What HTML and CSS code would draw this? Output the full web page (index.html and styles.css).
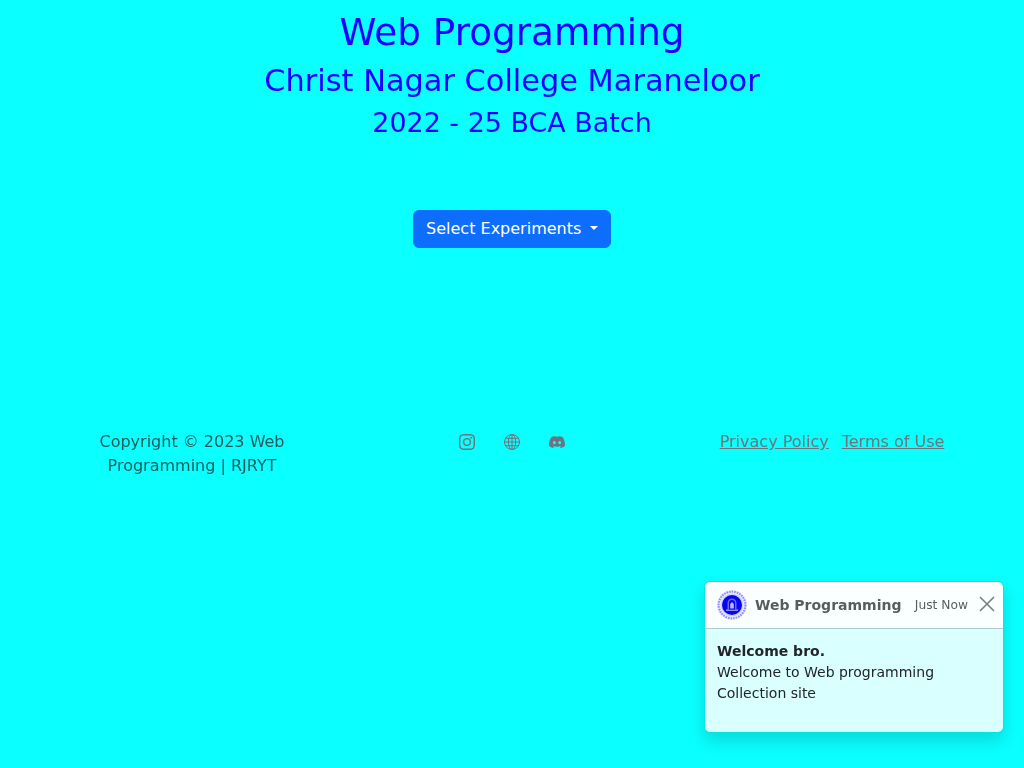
FILE: index.html
```html
<!DOCTYPE html>
<html lang="en">
<head>
<meta charset="utf-8">
<title>Web Programming</title>
<link rel="stylesheet" href="styles.css">
</head>
<body>
<header class="titles">
  <h1 class="t1">Web Programming</h1>
  <h2 class="t2">Christ Nagar College Maraneloor</h2>
  <h3 class="t3">2022 - 25 BCA Batch</h3>
</header>
<div class="action">
  <button class="btn" type="button"><span>Select Experiments</span><span class="caret"></span></button>
</div>
<footer class="footer">
  <div class="col copy">Copyright © 2023 Web Programming | RJRYT</div>
  <div class="col icons">
    <a class="icon" href="#"><svg viewBox="0 0 16 16" width="16" height="16" fill="currentColor"><path d="M8 0C5.829 0 5.556.01 4.703.048 3.85.088 3.269.222 2.76.42a3.9 3.9 0 0 0-1.417.923A3.9 3.9 0 0 0 .42 2.76C.222 3.268.087 3.85.048 4.7.01 5.555 0 5.827 0 8.001c0 2.172.01 2.444.048 3.297.04.852.174 1.433.372 1.942.205.526.478.972.923 1.417.444.445.89.719 1.416.923.51.198 1.09.333 1.942.372C5.555 15.99 5.827 16 8 16s2.444-.01 3.298-.048c.851-.04 1.434-.174 1.943-.372a3.9 3.9 0 0 0 1.416-.923c.445-.445.718-.891.923-1.417.197-.509.332-1.09.372-1.942C15.99 10.445 16 10.173 16 8s-.01-2.445-.048-3.299c-.04-.851-.175-1.433-.372-1.941a3.9 3.9 0 0 0-.923-1.417A3.9 3.9 0 0 0 13.24.42c-.51-.198-1.092-.333-1.943-.372C10.443.01 10.172 0 7.998 0zm-.717 1.442h.718c2.136 0 2.389.007 3.232.046.78.035 1.204.166 1.486.275.373.145.64.319.92.599s.453.546.598.92c.11.281.24.705.275 1.485.039.843.047 1.096.047 3.231s-.008 2.389-.047 3.232c-.035.78-.166 1.203-.275 1.485a2.5 2.5 0 0 1-.599.919c-.28.28-.546.453-.92.598-.28.11-.704.24-1.485.276-.843.038-1.096.047-3.232.047s-2.39-.009-3.233-.047c-.78-.036-1.203-.166-1.485-.276a2.5 2.5 0 0 1-.92-.598 2.5 2.5 0 0 1-.6-.92c-.109-.281-.24-.705-.275-1.485-.038-.843-.046-1.096-.046-3.233s.008-2.388.046-3.231c.036-.78.166-1.204.276-1.486.145-.373.319-.64.599-.92s.546-.453.92-.598c.282-.11.705-.24 1.485-.276.738-.034 1.024-.044 2.515-.045zm4.988 1.328a.96.96 0 1 0 0 1.92.96.96 0 0 0 0-1.92m-4.27 1.122a4.109 4.109 0 1 0 0 8.217 4.109 4.109 0 0 0 0-8.217m0 1.441a2.667 2.667 0 1 1 0 5.334 2.667 2.667 0 0 1 0-5.334"/></svg></a>
    <a class="icon" href="#"><svg viewBox="0 0 16 16" width="16" height="16" fill="none" stroke="currentColor" stroke-width="1"><circle cx="8" cy="8" r="7.5"/><ellipse cx="8" cy="8" rx="3.6" ry="7.5"/><path d="M8 .5v15M.5 8h15M1.6 4.3h12.8M1.6 11.7h12.8"/></svg></a>
    <a class="icon" href="#"><svg viewBox="0 0 16 16" width="16" height="16" fill="currentColor"><path d="M13.545 2.907a13.2 13.2 0 0 0-3.257-1.011.05.05 0 0 0-.052.025c-.141.25-.297.577-.406.833a12.2 12.2 0 0 0-3.658 0 8 8 0 0 0-.412-.833.05.05 0 0 0-.052-.025c-1.125.194-2.22.534-3.257 1.011a.04.04 0 0 0-.021.018C.356 6.024-.213 9.047.066 12.032q.003.022.021.037a13.3 13.3 0 0 0 3.995 2.02.05.05 0 0 0 .056-.019q.463-.63.818-1.329a.05.05 0 0 0-.01-.059l-.018-.011a9 9 0 0 1-1.248-.595.05.05 0 0 1-.02-.066l.015-.019q.127-.095.248-.195a.05.05 0 0 1 .051-.007c2.619 1.196 5.454 1.196 8.041 0a.05.05 0 0 1 .053.007q.121.1.248.195a.05.05 0 0 1-.004.085 8 8 0 0 1-1.249.594.05.05 0 0 0-.03.03.05.05 0 0 0 .003.041c.24.465.515.909.817 1.329a.05.05 0 0 0 .056.019 13.2 13.2 0 0 0 4.001-2.02.05.05 0 0 0 .021-.037c.334-3.451-.559-6.449-2.366-9.106a.03.03 0 0 0-.02-.019m-8.198 7.307c-.789 0-1.438-.724-1.438-1.612s.637-1.613 1.438-1.613c.807 0 1.45.73 1.438 1.613 0 .888-.637 1.612-1.438 1.612m5.316 0c-.788 0-1.438-.724-1.438-1.612s.637-1.613 1.438-1.613c.807 0 1.451.73 1.438 1.613 0 .888-.631 1.612-1.438 1.612"/></svg></a>
  </div>
  <div class="col links"><a href="#">Privacy Policy</a><a href="#">Terms of Use</a></div>
</footer>
<aside class="toast">
  <div class="toast-head">
    <svg class="logo" viewBox="0 0 30 30" width="30" height="30">
      <circle cx="15" cy="15" r="15" fill="#e9ebff"/>
      <circle cx="15" cy="15" r="13.4" fill="none" stroke="#8a8af5" stroke-width="2" stroke-dasharray="1.6 1"/>
      <circle cx="15" cy="15" r="11.3" fill="#cfd1ff"/>
      <circle cx="15" cy="15" r="10" fill="#0606f0"/>
      <path d="M9 21h12v-1.6H9z" fill="#8a8af8"/>
      <path d="M10.5 19.4V13a4.5 4.5 0 0 1 9 0v6.4z" fill="#6a6af5"/>
      <path d="M12 19.4V13a3 3 0 0 1 6 0v6.4z" fill="#0a0ae0"/>
      <path d="M13.2 18.5v-4.6L15 12l1.8 1.9v4.6z" fill="#b8b8ff"/>
    </svg>
    <strong class="brand">Web Programming</strong>
    <small class="when">Just Now</small>
    <svg class="close" viewBox="0 0 16 16" width="16" height="16" stroke="#7b7f82" stroke-width="1.6" fill="none"><path d="M1 1l14 14M15 1L1 15"/></svg>
  </div>
  <div class="toast-body"><b>Welcome bro.</b><br>Welcome to Web programming Collection site</div>
</aside>
</body>
</html>
```
FILE: styles.css
```css
* { box-sizing: border-box; }
html, body { margin: 0; height: 100%; }
body {
  background: #0affff;
  color: #212529;
  font-family: "DejaVu Sans", sans-serif;
  font-size: 16px;
  line-height: 1.5;
  overflow: hidden;
}
.titles, .action, .footer, .toast { will-change: opacity; }
.titles { text-align: center; color: #2200ff; padding-top: 10px; }
.titles h1, .titles h2, .titles h3 { font-weight: 400; line-height: 1.2; margin: 0 0 8px; }
.t1 { font-size: 37.36px; }
.t2 { font-size: 30.4px; }
.t3 { font-size: 26.94px; }
.action { display: flex; justify-content: center; padding-top: 62.5px; }
.btn {
  font: inherit;
  color: #fff;
  background: #0d6efd;
  border: 1px solid #0d6efd;
  border-radius: 6px;
  padding: 6px 12px;
  display: flex;
  align-items: center;
}
.caret {
  display: block;
  margin-left: 8.6px;
  margin-top: -2px;
  border-top: 4.8px solid #fff;
  border-left: 4.8px solid transparent;
  border-right: 4.8px solid transparent;
}
.footer {
  width: 960px;
  margin: 182px auto 0;
  display: grid;
  grid-template-columns: repeat(3, 1fr);
}
.col { padding: 0 12px; text-align: center; }
.copy { color: rgba(33, 37, 41, .75); }
.icons { display: flex; justify-content: center; gap: 29px; padding-top: 3px; }
.icon { display: block; height: 16px; color: #6c757d; }
.links a { color: #6c757d; margin: 0 6.5px; }
.toast {
  position: fixed;
  left: 704px;
  top: 581px;
  width: 300px;
  height: 152px;
  background: rgba(255, 255, 255, .85);
  background-clip: padding-box;
  border-radius: 6px;
  box-shadow: 0 8px 16px rgba(0, 0, 0, .15);
  border: 1px solid rgba(0, 0, 0, .1);
}
.toast-head {
  display: flex;
  align-items: center;
  height: 47px;
  padding: 0 8px 0 12px;
  background: rgba(255, 255, 255, .85);
  background-clip: padding-box;
  border-bottom: 1px solid rgba(0, 0, 0, .2);
  border-radius: 5px 5px 0 0;
  color: rgba(33, 37, 41, .75);
}
.logo { margin-right: 8px; flex: none; }
.brand { font-size: 14px; }
.when { font-size: 12.25px; margin-left: auto; }
.close { margin: 0 0 3px 11px; flex: none; }
.toast-body { padding: 12px; font-size: 14px; line-height: 21px; }
```
